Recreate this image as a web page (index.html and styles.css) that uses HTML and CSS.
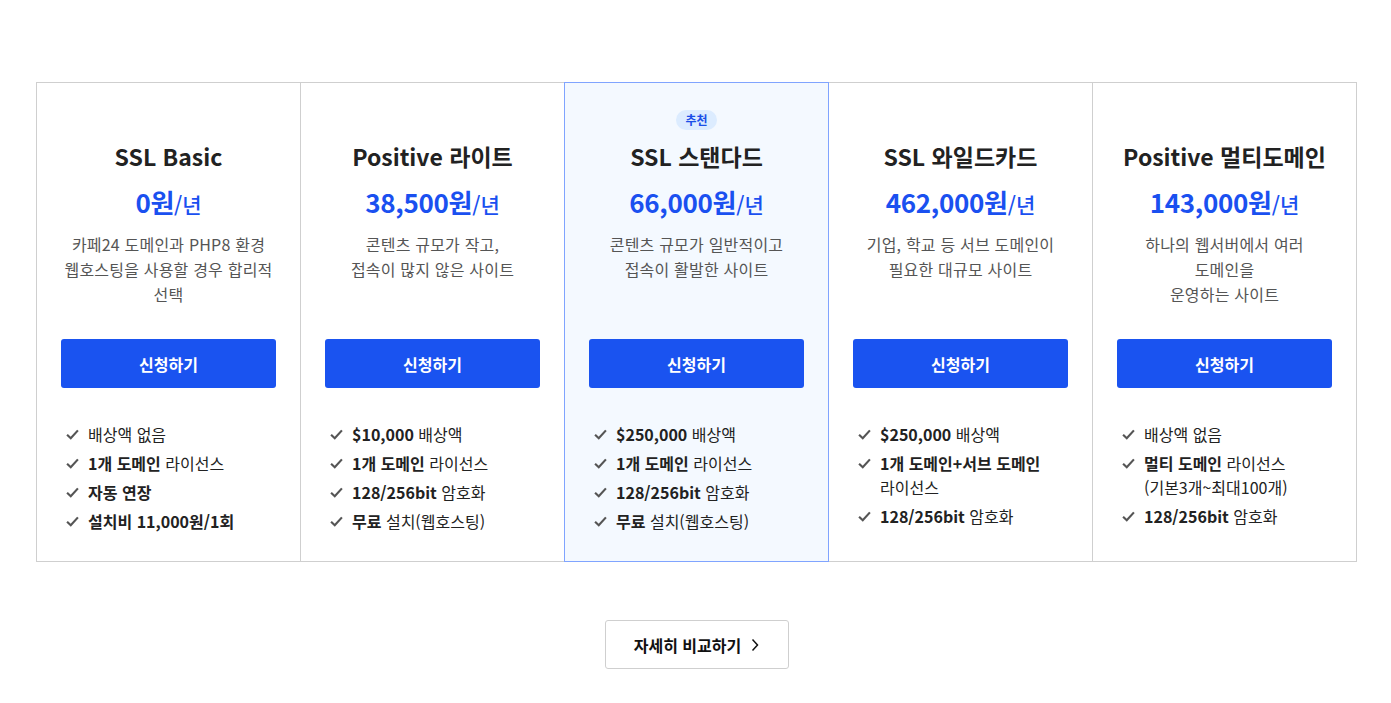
FILE: index.html
```html
<!DOCTYPE html>
<html lang="ko">
<head>
<meta charset="utf-8">
<title>SSL 인증서</title>
<link rel="stylesheet" href="styles.css">
</head>
<body>
<main class="page">
  <section class="plans">
    <article class="plan">
      <span class="badge badge-empty">추천</span>
      <h3 class="plan-title">SSL Basic</h3>
      <p class="price"><strong>0원</strong>/년</p>
      <p class="desc">카페24 도메인과 PHP8 환경<br>웹호스팅을 사용할 경우 합리적<br>선택</p>
      <a class="apply" href="#">신청하기</a>
      <ul class="features">
        <li><svg class="check" viewBox="0 0 12 10"><path d="M1 5.2 4.4 8.5 11 1.2"/></svg><span>배상액 없음</span></li>
        <li><svg class="check" viewBox="0 0 12 10"><path d="M1 5.2 4.4 8.5 11 1.2"/></svg><span><b>1개 도메인</b> 라이선스</span></li>
        <li><svg class="check" viewBox="0 0 12 10"><path d="M1 5.2 4.4 8.5 11 1.2"/></svg><span><b>자동 연장</b></span></li>
        <li><svg class="check" viewBox="0 0 12 10"><path d="M1 5.2 4.4 8.5 11 1.2"/></svg><span><b>설치비 11,000원/1회</b></span></li>
      </ul>
    </article>
    <article class="plan">
      <span class="badge badge-empty">추천</span>
      <h3 class="plan-title">Positive 라이트</h3>
      <p class="price"><strong>38,500원</strong>/년</p>
      <p class="desc">콘텐츠 규모가 작고,<br>접속이 많지 않은 사이트</p>
      <a class="apply" href="#">신청하기</a>
      <ul class="features">
        <li><svg class="check" viewBox="0 0 12 10"><path d="M1 5.2 4.4 8.5 11 1.2"/></svg><span><b>$10,000</b> 배상액</span></li>
        <li><svg class="check" viewBox="0 0 12 10"><path d="M1 5.2 4.4 8.5 11 1.2"/></svg><span><b>1개 도메인</b> 라이선스</span></li>
        <li><svg class="check" viewBox="0 0 12 10"><path d="M1 5.2 4.4 8.5 11 1.2"/></svg><span><b>128/256bit</b> 암호화</span></li>
        <li><svg class="check" viewBox="0 0 12 10"><path d="M1 5.2 4.4 8.5 11 1.2"/></svg><span><b>무료</b> 설치(웹호스팅)</span></li>
      </ul>
    </article>
    <article class="plan plan-best">
      <span class="badge">추천</span>
      <h3 class="plan-title">SSL 스탠다드</h3>
      <p class="price"><strong>66,000원</strong>/년</p>
      <p class="desc">콘텐츠 규모가 일반적이고<br>접속이 활발한 사이트</p>
      <a class="apply" href="#">신청하기</a>
      <ul class="features">
        <li><svg class="check" viewBox="0 0 12 10"><path d="M1 5.2 4.4 8.5 11 1.2"/></svg><span><b>$250,000</b> 배상액</span></li>
        <li><svg class="check" viewBox="0 0 12 10"><path d="M1 5.2 4.4 8.5 11 1.2"/></svg><span><b>1개 도메인</b> 라이선스</span></li>
        <li><svg class="check" viewBox="0 0 12 10"><path d="M1 5.2 4.4 8.5 11 1.2"/></svg><span><b>128/256bit</b> 암호화</span></li>
        <li><svg class="check" viewBox="0 0 12 10"><path d="M1 5.2 4.4 8.5 11 1.2"/></svg><span><b>무료</b> 설치(웹호스팅)</span></li>
      </ul>
    </article>
    <article class="plan">
      <span class="badge badge-empty">추천</span>
      <h3 class="plan-title">SSL 와일드카드</h3>
      <p class="price"><strong>462,000원</strong>/년</p>
      <p class="desc">기업, 학교 등 서브 도메인이<br>필요한 대규모 사이트</p>
      <a class="apply" href="#">신청하기</a>
      <ul class="features">
        <li><svg class="check" viewBox="0 0 12 10"><path d="M1 5.2 4.4 8.5 11 1.2"/></svg><span><b>$250,000</b> 배상액</span></li>
        <li><svg class="check" viewBox="0 0 12 10"><path d="M1 5.2 4.4 8.5 11 1.2"/></svg><span><b>1개 도메인+서브 도메인</b><br>라이선스</span></li>
        <li><svg class="check" viewBox="0 0 12 10"><path d="M1 5.2 4.4 8.5 11 1.2"/></svg><span><b>128/256bit</b> 암호화</span></li>
      </ul>
    </article>
    <article class="plan">
      <span class="badge badge-empty">추천</span>
      <h3 class="plan-title">Positive 멀티도메인</h3>
      <p class="price"><strong>143,000원</strong>/년</p>
      <p class="desc">하나의 웹서버에서 여러<br>도메인을<br>운영하는 사이트</p>
      <a class="apply" href="#">신청하기</a>
      <ul class="features">
        <li><svg class="check" viewBox="0 0 12 10"><path d="M1 5.2 4.4 8.5 11 1.2"/></svg><span>배상액 없음</span></li>
        <li><svg class="check" viewBox="0 0 12 10"><path d="M1 5.2 4.4 8.5 11 1.2"/></svg><span><b>멀티 도메인</b> 라이선스<br>(기본3개~최대100개)</span></li>
        <li><svg class="check" viewBox="0 0 12 10"><path d="M1 5.2 4.4 8.5 11 1.2"/></svg><span><b>128/256bit</b> 암호화</span></li>
      </ul>
    </article>
  </section>
  <div class="more-wrap">
    <a class="more" href="#">자세히 비교하기<svg class="chev" viewBox="0 0 8 14"><path d="M1.5 1.5 6.5 7 1.5 12.5"/></svg></a>
  </div>
</main>
</body>
</html>
```

FILE: styles.css
```css
* { box-sizing: border-box; }
html, body { margin: 0; padding: 0; background: #fff; }
body {
  font-family: "Noto Sans CJK KR", "Noto Sans", sans-serif;
  color: #222;
}
.page {
  width: 1321px;
  margin: 82px 0 0 36px;
}
.plans {
  display: flex;
  align-items: stretch;
}
.plan {
  flex: none;
  width: 265px;
  display: flex;
  flex-direction: column;
  align-items: center;
  border: 1px solid #cfcfcf;
  margin-left: -1px;
  padding: 27px 24px 28px;
  background: #fff;
}
.plan:first-child { margin-left: 0; }
.plan-best {
  position: relative;
  z-index: 1;
  background: #f4f9ff;
  border-color: #80a4ff;
}
.badge {
  display: inline-flex;
  align-items: center;
  height: 20px;
  padding: 0 9px;
  border-radius: 10px;
  background: #dcecff;
  color: #1a4fe8;
  font-size: 12px;
  font-weight: 700;
  line-height: 20px;
}
.badge-empty { visibility: hidden; }
.plan-title {
  margin: 10px 0 0;
  font-size: 23px;
  font-weight: 700;
  line-height: 32px;
  color: #222;
}
.price {
  margin: 12px 0 0;
  font-size: 21px;
  line-height: 36px;
  color: #1a50f0;
  font-weight: 500;
}
.price strong {
  font-size: 26px;
  font-weight: 700;
  letter-spacing: -0.3px;
}
.desc {
  margin: 10px 0 0;
  height: 75px;
  font-size: 16px;
  line-height: 25px;
  color: #555;
  text-align: center;
  letter-spacing: 0.2px;
}
.apply {
  display: flex;
  align-items: center;
  justify-content: center;
  width: 215px;
  height: 49px;
  margin-top: 32px;
  border-radius: 3px;
  background: #1a53f0;
  color: #fff;
  font-size: 16px;
  font-weight: 700;
  text-decoration: none;
}
.features {
  align-self: stretch;
  list-style: none;
  margin: 34px 0 0;
  padding: 0 0 0 5px;
  display: flex;
  flex-direction: column;
  gap: 5px;
}
.features li {
  display: flex;
  align-items: flex-start;
  gap: 9px;
  font-size: 16px;
  line-height: 24px;
  color: #222;
}
.features b { font-weight: 700; }
.check {
  flex: none;
  width: 13px;
  height: 11px;
  margin-top: 7px;
  fill: none;
  stroke: #555;
  stroke-width: 2;
}
.more-wrap {
  display: flex;
  justify-content: center;
  margin-top: 58px;
}
.more {
  display: flex;
  align-items: center;
  justify-content: center;
  gap: 10px;
  width: 184px;
  height: 49px;
  border: 1px solid #cfcfcf;
  border-radius: 3px;
  background: #fff;
  color: #111;
  font-size: 16px;
  font-weight: 700;
  text-decoration: none;
}
.chev {
  width: 8px;
  height: 14px;
  fill: none;
  stroke: #111;
  stroke-width: 1.5;
}
```
